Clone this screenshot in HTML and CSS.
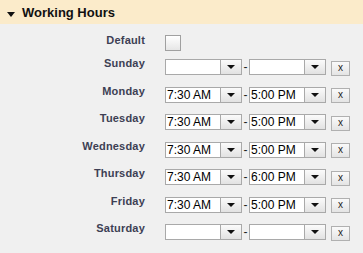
FILE: index.html
```html
<!DOCTYPE html>
<html lang="en">

<head>
  <meta charset="UTF-8">
  <title>Working Hours</title>
  <link rel="stylesheet" href="styles.css">
</head>

<body>
  <div class="panel">
    <div class="panel-head">
      <span class="toggle"></span>
      <h2>Working Hours</h2>
    </div>

    <div class="hours">
      <div class="row row-default">
        <label>Default</label>
        <div class="controls"><span class="check"></span></div>
      </div>
      <div class="row">
        <label>Sunday</label>
        <div class="controls">
          <div class="combo"><span class="val"></span><span class="btn"></span></div>
          <span class="dash">-</span>
          <div class="combo"><span class="val"></span><span class="btn"></span></div>
          <span class="clear">x</span>
        </div>
      </div>
      <div class="row">
        <label>Monday</label>
        <div class="controls">
          <div class="combo"><span class="val">7:30 AM</span><span class="btn"></span></div>
          <span class="dash">-</span>
          <div class="combo"><span class="val">5:00 PM</span><span class="btn"></span></div>
          <span class="clear">x</span>
        </div>
      </div>
      <div class="row">
        <label>Tuesday</label>
        <div class="controls">
          <div class="combo"><span class="val">7:30 AM</span><span class="btn"></span></div>
          <span class="dash">-</span>
          <div class="combo"><span class="val">5:00 PM</span><span class="btn"></span></div>
          <span class="clear">x</span>
        </div>
      </div>
      <div class="row">
        <label>Wednesday</label>
        <div class="controls">
          <div class="combo"><span class="val">7:30 AM</span><span class="btn"></span></div>
          <span class="dash">-</span>
          <div class="combo"><span class="val">5:00 PM</span><span class="btn"></span></div>
          <span class="clear">x</span>
        </div>
      </div>
      <div class="row">
        <label>Thursday</label>
        <div class="controls">
          <div class="combo"><span class="val">7:30 AM</span><span class="btn"></span></div>
          <span class="dash">-</span>
          <div class="combo"><span class="val">6:00 PM</span><span class="btn"></span></div>
          <span class="clear">x</span>
        </div>
      </div>
      <div class="row">
        <label>Friday</label>
        <div class="controls">
          <div class="combo"><span class="val">7:30 AM</span><span class="btn"></span></div>
          <span class="dash">-</span>
          <div class="combo"><span class="val">5:00 PM</span><span class="btn"></span></div>
          <span class="clear">x</span>
        </div>
      </div>
      <div class="row">
        <label>Saturday</label>
        <div class="controls">
          <div class="combo"><span class="val"></span><span class="btn"></span></div>
          <span class="dash">-</span>
          <div class="combo"><span class="val"></span><span class="btn"></span></div>
          <span class="clear">x</span>
        </div>
      </div>
    </div>
  </div>
</body>

</html>
```

FILE: styles.css
```css
* {
  box-sizing: border-box;
}
body {
  margin: 0;
  background-color: #f0f0f0;
  font-family: 'Liberation Sans', Arial, sans-serif;
}
.panel-head {
  height: 24px;
  background-color: #fbebca;
  display: flex;
  align-items: center;
  padding-left: 7px;
  gap: 7px;
}
.toggle {
  width: 0;
  height: 0;
  border-left: 4px solid transparent;
  border-right: 4px solid transparent;
  border-top: 5px solid #111;
  margin-top: 5px;
}
.panel-head h2 {
  margin: 0;
  font-size: 13px;
  font-weight: bold;
  color: #111;
}
.hours {
  padding-top: 11px;
}
.row {
  display: flex;
  height: 16px;
  margin-bottom: 11.5px;
}
.row-default {
  margin-bottom: 8px;
}
.row label {
  width: 145px;
  margin-right: 20px;
  text-align: right;
  font-size: 11px;
  font-weight: bold;
  color: #3d3f54;
  margin-top: -2px;
  letter-spacing: 0.2px;
}
.row-default label {
  margin-top: -1px;
}
.controls {
  display: flex;
  align-items: center;
}
.check {
  width: 16px;
  height: 16px;
  border: 1px solid #a0a0a0;
  background-image: linear-gradient(to bottom, #ffffff, #e6e6e6);
}
.combo {
  display: flex;
  height: 16px;
  width: 77px;
}
.val {
  width: 56px;
  border: 1px solid #a9a9a9;
  background-color: #fff;
  font-size: 12px;
  line-height: 14px;
  padding-left: 1px;
  color: #000;
}
.btn {
  width: 21px;
  border: 1px solid #a9a9a9;
  border-left: none;
  background-image: linear-gradient(to bottom, #fbfbfb, #e2e2e2);
  display: flex;
  align-items: center;
  justify-content: center;
}
.btn::after {
  content: '';
  border-left: 4px solid transparent;
  border-right: 4px solid transparent;
  border-top: 4px solid #111;
}
.dash {
  width: 7px;
  text-align: center;
  font-size: 12px;
  line-height: 16px;
  color: #222;
}
.clear {
  margin-left: 5px;
  width: 19px;
  height: 15px;
  margin-top: 2px;
  border: 1px solid #b0b0b0;
  background-image: linear-gradient(to bottom, #fafafa, #e4e4e4);
  font-size: 10px;
  line-height: 11px;
  text-align: center;
  color: #222;
}
```
